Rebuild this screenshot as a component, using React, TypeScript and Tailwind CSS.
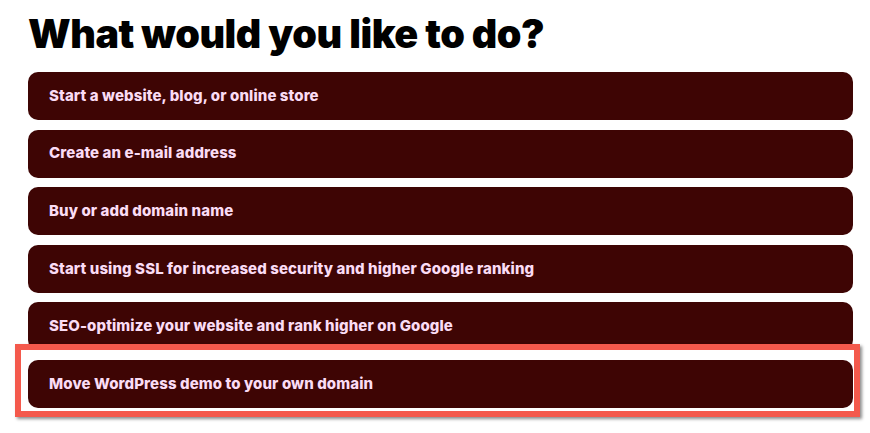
const OPTIONS = [
  'Start a website, blog, or online store',
  'Create an e-mail address',
  'Buy or add domain name',
  'Start using SSL for increased security and higher Google ranking',
  'SEO-optimize your website and rank higher on Google',
  'Move WordPress demo to your own domain',
]

function OptionButton({ label, highlighted }: { label: string; highlighted?: boolean }) {
  return (
    <div className="relative">
      {highlighted && (
        <div className="pointer-events-none absolute -left-[13px] -top-[16px] -right-[7px] -bottom-[9px] border-[6px] border-[#f4594c] shadow-[2px_2px_3px_rgba(0,0,0,0.45)]" />
      )}
      <button className="flex h-12 w-full items-center rounded-[10px] bg-[#3e0504] px-[21px] text-left text-[15px] font-extrabold tracking-[0.1px] text-[#fadcf4]">
        {label}
      </button>
    </div>
  )
}

export default function App() {
  return (
    <div
      className="h-[433px] w-[870px] bg-white pl-[28px] pr-[17px] pt-[8px]"
      style={{ fontFamily: 'Inter, "Noto Sans", sans-serif' }}
    >
      <h1 className="text-[39.5px] font-black leading-[52px] tracking-[-0.45px] text-black">
        What would you like to do?
      </h1>
      <div className="mt-[12px] flex flex-col gap-[9.6px]">
        {OPTIONS.map((label, i) => (
          <OptionButton key={label} label={label} highlighted={i === OPTIONS.length - 1} />
        ))}
      </div>
    </div>
  )
}
